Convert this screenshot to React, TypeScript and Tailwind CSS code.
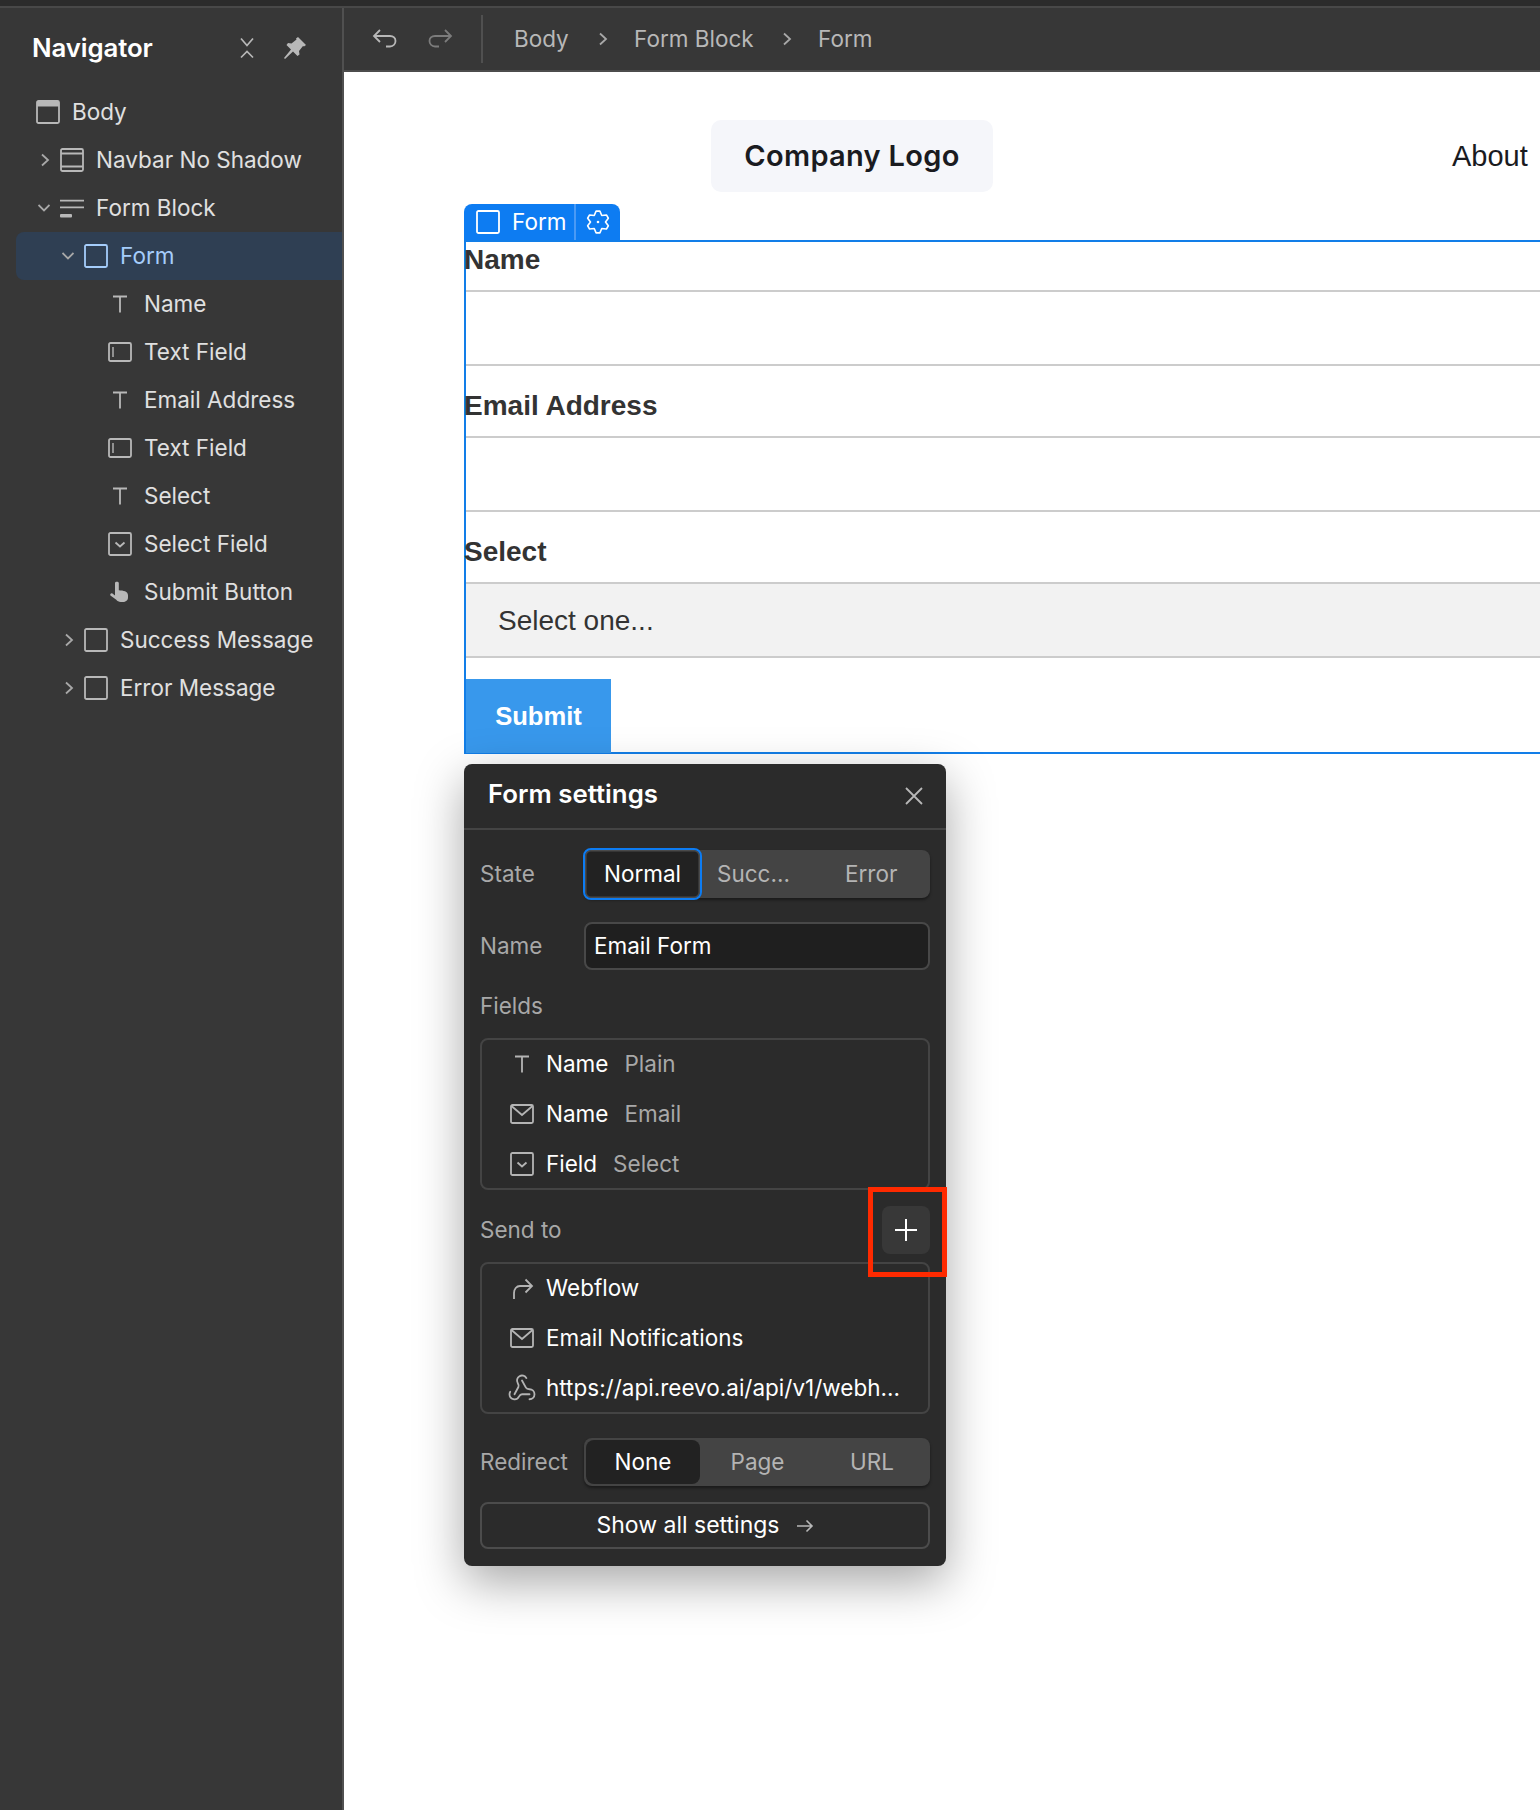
import React from "react";

const sw = 1.8;
const Ic = ({ children, w = 24, h = 24, className = "" }: { children: React.ReactNode; w?: number; h?: number; className?: string }) => (
  <svg width={w} height={h} viewBox={`0 0 ${w} ${h}`} fill="none" stroke="currentColor" strokeWidth={sw} className={`shrink-0 ${className}`}>
    {children}
  </svg>
);

const BodyIcon = () => (
  <Ic><rect x="1" y="1" width="22" height="22" rx="1.5" /><rect x="1" y="1" width="22" height="5.5" fill="currentColor" stroke="none" /></Ic>
);
const NavbarIcon = () => (
  <Ic><rect x="1" y="1" width="22" height="22" rx="1.5" /><path d="M1 5.5h22M1 18.5h22" /></Ic>
);
const BlockIcon = () => (
  <Ic><path d="M0 4.700h24M0 11.300h24" /><rect x="0" y="18" width="12" height="3.500" rx="1" fill="currentColor" stroke="none" /></Ic>
);
const SquareIcon = () => <Ic><rect x="1" y="1" width="22" height="22" rx="1.5" /></Ic>;
const TIcon = () => <Ic><path d="M5 4.5h14M12 4.5v16" /></Ic>;
const FieldIcon = () => (
  <Ic><rect x="1" y="3" width="22" height="18" rx="1.5" /><path d="M5 7v10" strokeWidth="1.4" /></Ic>
);
const SelectIcon = () => (
  <Ic><rect x="1" y="1" width="22" height="22" rx="1.5" /><path d="M7.5 10.5l4.5 4 4.5-4" /></Ic>
);
const HandIcon = () => (
  <svg width="24" height="24" viewBox="0 0 24 24" fill="currentColor" className="shrink-0">
    <path d="M7 3c0-1.600 3.800-1.600 3.800 0v7.200c4.500.3 9.200 1 9.200 5v2.300c0 2.800-2.400 4.500-5 4.500h-2.300c-2 0-3.400-.9-4.400-2.200L2.400 15.500c-.8-1.200.9-3 2.300-1.800L7 15.500z" />
  </svg>
);
const MailIcon = () => (
  <Ic><rect x="1" y="3" width="22" height="18" rx="1.5" /><path d="M1.5 4l10.5 9 10.500-9" /></Ic>
);
const RedirectIcon = () => (
  <Ic><path d="M4 23v-6c0-4 2.500-7 6-7h12M15.500 3.500L22 10l-6.500 6.500" /></Ic>
);
const HookIcon = () => (
  <svg width="30" height="30" viewBox="0 0 24 24" fill="none" stroke="currentColor" strokeWidth="1.450" strokeLinecap="round" strokeLinejoin="round" className="shrink-0">
    <path d="M18 16.98h-5.990c-1.100 0-1.950.940-2.480 1.900A4 4 0 0 1 2 17c.010-.700.200-1.400.570-2" />
    <path d="m6 17 3.130-5.780c.530-.970.100-2.180-.500-3.100a4 4 0 1 1 6.890-4.060" />
    <path d="m12 6 3.130 5.730C15.660 12.700 16.900 13 18 13a4 4 0 0 1 0 8" />
  </svg>
);
const Chev = ({ dir }: { dir: "right" | "down" }) => (
  <svg width="12" height="14" viewBox="0 0 12 14" fill="none" stroke="#a8a8a8" strokeWidth="1.8" className={dir === "down" ? "ml-[2px] shrink-0" : "ml-[3px] shrink-0"}>
    {dir === "right" ? <path d="M3 1.5L9 7l-6 5.500" /> : <path d="M0.500 4l5.500 5.500L11.500 4" />}
  </svg>
);

type Row = { label: string; pl: string; icon: React.ReactNode; chev?: "right" | "down" | "none"; active?: boolean };
const rows: Row[] = [
  { label: "Body", pl: "pl-[20px]", icon: <BodyIcon /> },
  { label: "Navbar No Shadow", pl: "pl-[20px]", icon: <NavbarIcon />, chev: "right" },
  { label: "Form Block", pl: "pl-[20px]", icon: <BlockIcon />, chev: "down" },
  { label: "Form", pl: "pl-[44px]", icon: <SquareIcon />, chev: "down", active: true },
  { label: "Name", pl: "pl-[68px]", icon: <TIcon />, chev: "none" },
  { label: "Text Field", pl: "pl-[68px]", icon: <FieldIcon />, chev: "none" },
  { label: "Email Address", pl: "pl-[68px]", icon: <TIcon />, chev: "none" },
  { label: "Text Field", pl: "pl-[68px]", icon: <FieldIcon />, chev: "none" },
  { label: "Select", pl: "pl-[68px]", icon: <TIcon />, chev: "none" },
  { label: "Select Field", pl: "pl-[68px]", icon: <SelectIcon />, chev: "none" },
  { label: "Submit Button", pl: "pl-[68px]", icon: <HandIcon />, chev: "none" },
  { label: "Success Message", pl: "pl-[44px]", icon: <SquareIcon />, chev: "right" },
  { label: "Error Message", pl: "pl-[44px]", icon: <SquareIcon />, chev: "right" },
];

const Sidebar = () => (
  <aside className="w-[344px] shrink-0 bg-[#373737] border-r-2 border-[#505050] flex flex-col">
    <div className="h-[80px] flex items-center pl-[32px] pr-[35px] justify-between">
      <span className="text-[25.800px] font-semibold text-white tracking-[-0.1px]">Navigator</span>
      <div className="flex items-center gap-[28px] text-[#b8b8b8]">
        <svg width="16" height="22" viewBox="0 0 16 22" fill="none" stroke="currentColor" strokeWidth="1.7">
          <path d="M2 1.500l6 7 6-7M2 20.500l6-6 6 6" />
        </svg>
        <svg width="24" height="24" viewBox="0 0 24 24" fill="currentColor">
          <path d="M15 1l8 8-2 1.500-1-.5-4 5 .5 3.500-2 1.500-4.500-4.500L2 23l-1-1 7-8.500L3.500 9 5 7l3.500.5 5-4-.5-1z" />
        </svg>
      </div>
    </div>
    <div className="pl-4">
      {rows.map((r, i) => (
        <div
          key={i}
          className={`h-12 flex items-center rounded-l-lg ${r.pl} ${r.active ? "bg-[#2f3f53] text-[#a5cdfb]" : "text-[#e0e0e0]"}`}
        >
          {r.chev && (
            <span className="w-6 shrink-0 flex items-center">{r.chev !== "none" && <Chev dir={r.chev} />}</span>
          )}
          <span className={r.active ? "text-[#a5cdfb] flex" : "text-[#b8b8b8] flex"}>{r.icon}</span>
          <span className="ml-[12px] text-[22.500px] whitespace-nowrap">{r.label}</span>
        </div>
      ))}
    </div>
  </aside>
);

const Header = () => (
  <header className="h-[64px] shrink-0 bg-[#373737] border-b-2 border-[#4c4c4c] flex items-center pl-[28px] text-[#b4b4b4]">
    <svg width="26" height="24" viewBox="0 0 26 24" fill="none" stroke="#b8b8b8" strokeWidth="1.8">
      <path d="M8 3L2 9l6 6M2 9h16c3.500 0 5.500 2.300 5.500 5s-2 5.500-5.500 5.500h-4" />
    </svg>
    <svg width="26" height="24" viewBox="0 0 26 24" fill="none" stroke="#7c7c7c" strokeWidth="1.8" className="ml-[29px]">
      <path d="M18 3l6 6-6 6M24 9H8c-3.500 0-5.500 2.300-5.500 5s2 5.500 5.500 5.500h4" />
    </svg>
    <span className="w-[2px] h-[48px] bg-[#505050] ml-[28px]" />
    <div className="flex items-center text-[22.500px] ml-[31px] text-[#b8b8b8]">
      <span className="w-[80px]">Body</span>
      <Chev dir="right" />
      <span className="ml-[25px] w-[144px]">Form Block</span>
      <Chev dir="right" />
      <span className="ml-[25px]">Form</span>
    </div>
  </header>
);

const Divider = () => <div className="h-[2px] bg-[#cccccc]" />;

const Label = ({ children }: { children: React.ReactNode }) => (
  <div className="-ml-[2px] font-['Liberation_Sans',Arial,sans-serif] font-bold text-[28px] text-[#333333] leading-none">{children}</div>
);

const FormArea = () => (
  <div className="ml-[120px] mt-[-2px]">
    <div className="w-[156px] h-[36px] bg-[#0d7cf2] rounded-t-lg flex items-center text-white pl-[12px]">
      <svg width="24" height="24" viewBox="0 0 24 24" fill="none" stroke="currentColor" strokeWidth="1.8" className="shrink-0">
        <rect x="1" y="1" width="22" height="22" rx="1.500" />
      </svg>
      <span className="text-[22.500px] ml-[12px] w-[54px]">Form</span>
      <span className="w-[2px] h-full bg-[#4a9af5] ml-[8px]" />
      <svg width="24" height="24" viewBox="0 0 24 24" fill="none" stroke="currentColor" strokeWidth="1.6" strokeLinejoin="round" className="ml-[10px] shrink-0">
        <path d="M10.090 1.170L13.910 1.170 15.750 5.500 20.430 4.930 22.340 8.240 19.500 12 22.340 15.760 20.430 19.070 15.750 18.500 13.910 22.830 10.090 22.830 8.250 18.500 3.570 19.070 1.660 15.760 4.500 12 1.660 8.240 3.570 4.930 8.250 5.500Z" />
        <circle cx="12" cy="12" r="1.300" fill="currentColor" stroke="none" />
      </svg>
    </div>
    <div className="border-t-2 border-b-2 border-l-2 border-[#127ee8] h-[514px]">
      <div className="h-[48px] pt-[4px]"><Label>Name</Label></div>
      <Divider />
      <div className="h-[72px]" />
      <Divider />
      <div className="h-[70px] pt-[26px]"><Label>Email Address</Label></div>
      <Divider />
      <div className="h-[72px]" />
      <Divider />
      <div className="h-[70px] pt-[26px]"><Label>Select</Label></div>
      <Divider />
      <div className="h-[72px] bg-[#f2f2f2] flex items-center pl-[32px] pt-[1px] font-['Liberation_Sans',Arial,sans-serif] text-[28px] text-[#333333]">Select one...</div>
      <Divider />
      <div className="h-[21px]" />
      <div className="w-[145px] h-[74px] bg-[#3898ec] text-white font-['Liberation_Sans',Arial,sans-serif] font-bold text-[25.600px] flex items-center justify-center">Submit</div>
    </div>
  </div>
);

const FieldRow = ({ icon, a, b, className = "" }: { icon: React.ReactNode; a: string; b?: string; className?: string }) => (
  <div className={`h-[50px] shrink-0 flex items-center whitespace-nowrap ${className}`}>
    <span className="w-[30px] flex justify-center text-[#b4b4b4] shrink-0">{icon}</span>
    <span className="ml-[9px] text-white">{a}</span>
    {b && <span className="ml-[16px] text-[#a8a8a8]">{b}</span>}
  </div>
);

const Panel = () => (
  <div className="relative ml-[120px] mt-[10px] w-[482px] h-[802px] bg-[#2b2b2b] rounded-lg shadow-[0_16px_48px_rgba(0,0,0,0.35)] text-[22.500px] flex flex-col">
    <div className="h-[66px] shrink-0 border-b-2 border-[#444444] flex items-center justify-between pl-[24px] pr-[22px]">
      <span className="text-[25.800px] font-semibold text-white pb-[4px]">Form settings</span>
      <svg width="20" height="20" viewBox="0 0 20 20" stroke="#b8b8b8" strokeWidth="1.8"><path d="M2 2l16 16M18 2L2 18" /></svg>
    </div>
    <div className="px-[16px] flex flex-col">
      <div className="flex items-center mt-[20px] h-[48px]">
        <span className="w-[104px] text-[#a8a8a8]">State</span>
        <div className="flex-1 h-[48px] bg-[#444444] rounded-lg shadow-[0_2px_3px_rgba(0,0,0,0.4)] flex items-center text-[#b4b4b4]">
          <span className="w-[119px] h-[52px] -ml-[1px] rounded-lg border-2 border-[#0d7cf2] shadow-[inset_0_0_0_1.500px_#4a4a4a] bg-[#222222] text-white flex items-center justify-center shrink-0">Normal</span>
          <span className="ml-[15px] w-[128px] shrink-0">Succ...</span>
          <span>Error</span>
        </div>
      </div>
      <div className="flex items-center mt-[24px] h-[48px]">
        <span className="w-[104px] text-[#a8a8a8]">Name</span>
        <div className="flex-1 h-[48px] rounded-lg border-2 border-[#484848] bg-[#1f1f1f] text-white flex items-center pl-[8px]">Email Form</div>
      </div>
      <div className="mt-[20px] h-[32px] flex items-center text-[#a8a8a8]">Fields</div>
      <div className="mt-[16px] h-[152px] rounded-lg border-2 border-[#444444] pl-[25px] flex flex-col">
        <FieldRow icon={<TIcon />} a="Name" b="Plain" className="-mt-[1px]" />
        <FieldRow icon={<MailIcon />} a="Name" b="Email" />
        <FieldRow icon={<SelectIcon />} a="Field" b="Select" />
      </div>
      <div className="mt-[16px] h-[48px] flex items-center justify-between">
        <span className="text-[#a8a8a8]">Send to</span>
        <div className="w-[48px] h-[48px] rounded-lg bg-[#383838] flex items-center justify-center">
          <svg width="22" height="22" viewBox="0 0 22 22" stroke="white" strokeWidth="2"><path d="M11 0v22M0 11h22" /></svg>
        </div>
      </div>
      <div className="mt-[8px] h-[152px] rounded-lg border-2 border-[#444444] pl-[25px] flex flex-col">
        <FieldRow icon={<RedirectIcon />} a="Webflow" className="-mt-[1px]" />
        <FieldRow icon={<MailIcon />} a="Email Notifications" />
        <FieldRow icon={<HookIcon />} a="https://api.reevo.ai/api/v1/webh..." />
      </div>
      <div className="flex items-center mt-[24px] h-[48px]">
        <span className="w-[104px] text-[#a8a8a8]">Redirect</span>
        <div className="flex-1 h-[48px] bg-[#444444] rounded-lg shadow-[0_2px_3px_rgba(0,0,0,0.4)] flex items-center text-[#b4b4b4] pl-[2px]">
          <span className="w-[114px] h-[44px] rounded-lg bg-[#222222] text-white flex items-center justify-center shrink-0">None</span>
          <span className="w-[115px] text-center shrink-0">Page</span>
          <span className="w-[114px] text-center shrink-0">URL</span>
        </div>
      </div>
      <div className="mt-[16px] h-[47px] rounded-lg border-2 border-[#4c4c4c] flex items-center justify-center text-white">
        <span className="text-[23px]">Show all settings</span>
        <svg width="18" height="14" viewBox="0 0 18 14" fill="none" stroke="#b8b8b8" strokeWidth="1.600" className="ml-[16px]">
          <path d="M1 7h15M10.500 1.500L16 7l-5.500 5.500" />
        </svg>
      </div>
    </div>
    <div className="absolute left-[404px] top-[423px] w-[79px] h-[90px] border-[5px] border-[#ff2a00]" />
  </div>
);

export default function App() {
  return (
    <div className="w-[1540px] h-[1810px] overflow-hidden flex flex-col bg-[#2b2b2b] font-['Inter',sans-serif]">
      <div className="h-[6px] shrink-0 bg-[#2b2b2b]" />
      <div className="h-[2px] shrink-0 bg-[#484848]" />
      <div className="flex flex-1 min-h-0">
        <Sidebar />
        <main className="flex-1 min-w-0 flex flex-col bg-white">
          <Header />
          <div className="flex-1 min-h-0 bg-white">
            <div className="h-[134px] flex items-start pt-[48px]">
              <div className="ml-[367px] w-[282px] h-[72px] shrink-0 rounded-[10px] bg-[#f5f6fa] flex items-center justify-center font-semibold text-[#1a1b1f] text-[29px] tracking-[0.3px]">Company Logo</div>
              <span className="ml-[459px] mt-[15px] font-['Liberation_Sans',Arial,sans-serif] text-[29px] leading-[42px] text-[#1a1b1f]">About</span>
            </div>
            <FormArea />
            <Panel />
          </div>
        </main>
      </div>
    </div>
  );
}
